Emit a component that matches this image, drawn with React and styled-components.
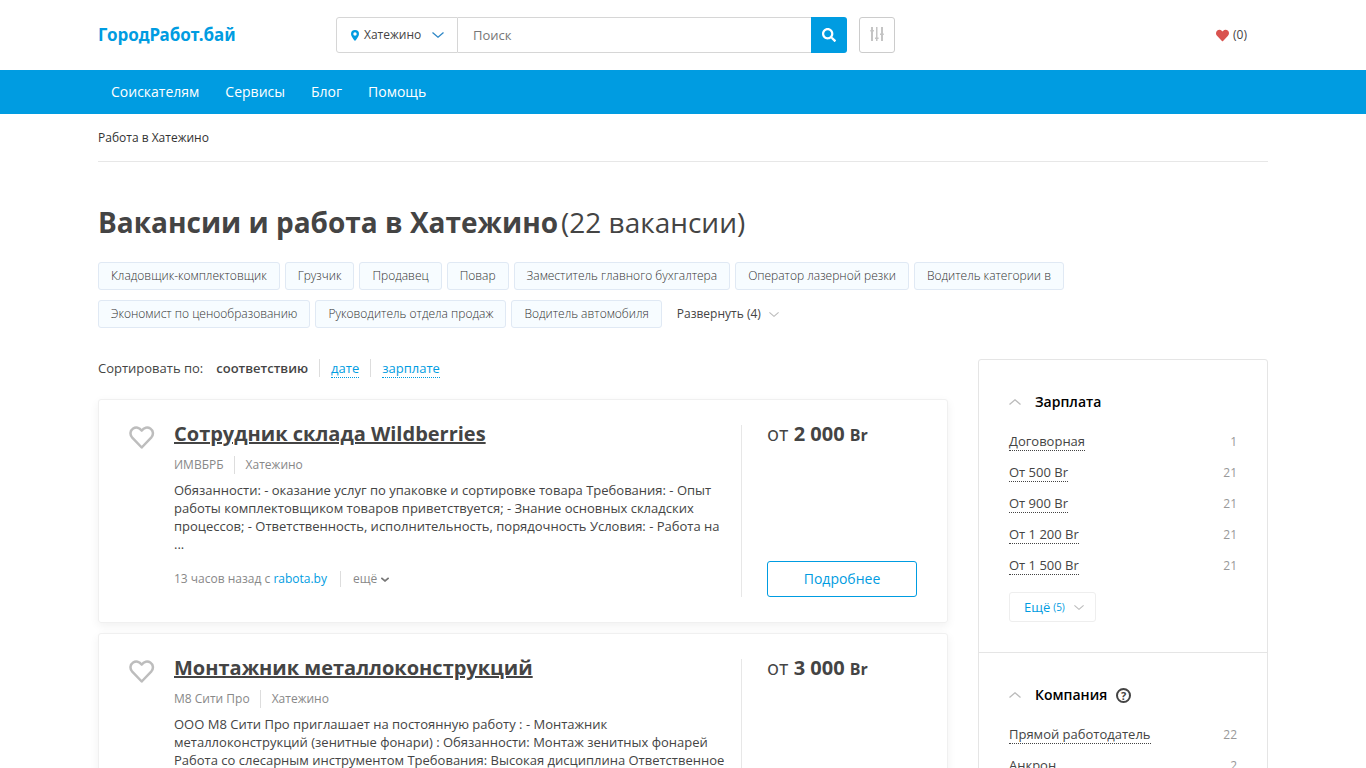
import styled, {createGlobalStyle} from 'styled-components';
import {FaSearch, FaHeart} from 'react-icons/fa';

const tags = [
    'Кладовщик-комплектовщик', 'Грузчик', 'Продавец', 'Повар',
    'Заместитель главного бухгалтера', 'Оператор лазерной резки',
    'Водитель категории в', 'Экономист по ценообразованию',
    'Руководитель отдела продаж', 'Водитель автомобиля'
];

const jobs = [
    {
        title: 'Сотрудник склада Wildberries',
        company: 'ИМВБРБ',
        city: 'Хатежино',
        price: '2 000',
        text: 'Обязанности: - оказание услуг по упаковке и сортировке товара Требования: - Опыт работы комплектовщиком товаров приветствуется; - Знание основных складских процессов; - Ответственность, исполнительность, порядочность Условия: - Работа на ...'
    },
    {
        title: 'Монтажник металлоконструкций',
        company: 'М8 Сити Про',
        city: 'Хатежино',
        price: '3 000',
        text: 'ООО М8 Сити Про приглашает на постоянную работу : - Монтажник металлоконструкций (зенитные фонари) : Обязанности: Монтаж зенитных фонарей Работа со слесарным инструментом Требования: Высокая дисциплина Ответственное ...'
    }
];

const salaries = [
    ['Договорная', 1], ['От 500 Br', 21], ['От 900 Br', 21],
    ['От 1 200 Br', 21], ['От 1 500 Br', 21]
];

const companies = [['Прямой работодатель', 22], ['Анкрон', 2]];

const Chevron = ({width = 12, height = 6, color = '#bbb', stroke = 1.3, up}) => (
    <svg width={width} height={height} viewBox="0 0 12 6" fill="none" stroke={color} strokeWidth={stroke} aria-hidden="true">
        <path d={up ? 'M.5 5.5 6 .8l5.500 4.700' : 'M.5.5 6 5.200 11.500.5'} />
    </svg>
);

const Pin = () => (
    <svg width="8" height="11" viewBox="0 0 8 11" aria-hidden="true">
        <path fill="#009ce1" fillRule="evenodd" d="M4 0a4 4 0 0 1 4 4c0 2.300-2.300 5-4 7C2.300 9 0 6.300 0 4a4 4 0 0 1 4-4zm0 2.300a1.700 1.700 0 1 0 0 3.400 1.700 1.700 0 0 0 0-3.400z" />
    </svg>
);

const Sliders = () => (
    <svg width="14" height="16" viewBox="0 0 14 16" fill="#c4c4c4" aria-hidden="true">
        <path d="M1 0h2v14H1zM6 0h1.500v14H6zM11 0h2v14h-2zM.3 3h3.600v1.500H.3zM5 10.500h3.600V12H5zM10 6.500h3.800V8H10z" />
    </svg>
);

const HeartOutline = () => (
    <svg width="27" height="24" viewBox="0 0 27 24" fill="none" stroke="#bdbdbd" strokeWidth="2.500" strokeLinejoin="round" aria-hidden="true">
        <path d="M12.700 4.600C10.500 1.500 6.800.800 4.100 2.500 1 4.600.700 8.600 3 11.300L12.700 21.500l9.700-10.200c2.300-2.700 2-6.700-1.100-8.800-2.700-1.700-6.400-1-8.600 2.100z" />
    </svg>
);

const JobCard = ({job}) => (
    <Card>
        <Favorite aria-label="В избранное"><HeartOutline /></Favorite>
        <JobBody>
            <JobTitle><a href="#job">{job.title}</a></JobTitle>
            <Meta>
                <span>{job.company}</span>
                <span>{job.city}</span>
            </Meta>
            <Description>{job.text}</Description>
            <Source>
                <span>13 часов назад с <a href="#source">rabota.by</a></span>
                <MoreToggle>ещё <Chevron width={8} height={5} color="#777" stroke={2.5} /></MoreToggle>
            </Source>
        </JobBody>
        <PriceColumn>
            <Price>от <b>{job.price}</b> <strong>Br</strong></Price>
            <Details href="#details">Подробнее</Details>
        </PriceColumn>
    </Card>
);

const FilterList = ({items}) => (
    <Filters>
        {items.map(([name, count]) => (
            <li key={name}>
                <a href="#filter">{name}</a>
                <span>{count}</span>
            </li>
        ))}
    </Filters>
);

const App = () => {
    return(
        <>
            <GlobalStyle />
            <Container>
                <Header>
                    <Logo href="#home">ГородРабот.бай</Logo>
                    <Search onSubmit={(e) => e.preventDefault()}>
                        <City type="button"><Pin /> Хатежино <Chevron color="#2f87c6" /></City>
                        <SearchInput type="text" placeholder="Поиск" aria-label="Поиск" />
                        <SearchButton aria-label="Найти"><FaSearch size={14} /></SearchButton>
                    </Search>
                    <FilterButton aria-label="Фильтры"><Sliders /></FilterButton>
                    <Favorites href="#favorites"><FaHeart size={13} color="#d9534f" /> (0)</Favorites>
                </Header>
            </Container>
            <NavBar>
                <Container>
                    <Nav>
                        <a href="#seekers">Соискателям</a>
                        <a href="#services">Сервисы</a>
                        <a href="#blog">Блог</a>
                        <a href="#help">Помощь</a>
                    </Nav>
                </Container>
            </NavBar>
            <Container>
                <Breadcrumb>Работа в Хатежино</Breadcrumb>
                <Heading>Вакансии и работа в Хатежино <span>(22 вакансии)</span></Heading>
                <Tags>
                    {tags.map((tag) => <Tag href="#tag" key={tag}>{tag}</Tag>)}
                    <Expand>Развернуть (4) <Chevron width={10} height={5} /></Expand>
                </Tags>
                <Columns>
                    <main>
                        <Sort>
                            <span>Сортировать по:</span>
                            <SortItem><b>соответствию</b></SortItem>
                            <SortItem><a href="#date">дате</a></SortItem>
                            <SortItem><a href="#salary">зарплате</a></SortItem>
                        </Sort>
                        <Jobs>
                            {jobs.map((job) => <JobCard job={job} key={job.title} />)}
                        </Jobs>
                    </main>
                    <Sidebar>
                        <Panel>
                            <PanelTitle><Chevron up /> Зарплата</PanelTitle>
                            <FilterList items={salaries} />
                            <ShowMore>Ещё <small>(5)</small><Chevron width={10} height={5} /></ShowMore>
                        </Panel>
                        <Panel>
                            <PanelTitle><Chevron up /> Компания <Help>?</Help></PanelTitle>
                            <FilterList items={companies} />
                        </Panel>
                    </Sidebar>
                </Columns>
            </Container>
        </>
    );
}

const GlobalStyle = createGlobalStyle`
    *{
        box-sizing: border-box;
    }

    body{
        margin: 0;
        background: #fff;
        color: #444;
        font: 13px/18px "Open Sans", "Noto Sans", sans-serif;
    }

    a{
        color: #009ce1;
        text-decoration: none;
    }

    button, input{
        font: inherit;
        color: inherit;
        padding: 0;
        margin: 0;
        border: 0;
        background: none;
    }

    button{
        cursor: pointer;
    }

    svg{
        flex: none;
    }
`;

const Container = styled.div`
    max-width: 1170px;
    margin: 0 auto;
`;

const Header = styled.header`
    display: flex;
    align-items: center;
    height: 70px;
    padding-right: 21px;
`;

const Logo = styled.a`
    width: 238px;
    font-family: "Noto Sans", sans-serif;
    font-size: 17px;
    line-height: 24px;
    font-weight: 700;
`;

const Search = styled.form`
    display: flex;
    flex: 0 1 511px;
    height: 36px;
    margin-right: 12px;
`;

const City = styled.button`
    display: flex;
    align-items: center;
    gap: 5px;
    width: 122px;
    padding-left: 14px;
    border: 1px solid #d6d6d6;
    border-radius: 3px 0 0 3px;
    font-size: 12px;

    svg:last-child{
        margin-left: 6px;
    }
`;

const SearchInput = styled.input`
    flex: 1;
    min-width: 0;
    padding: 0 15px;
    border: 1px solid #d6d6d6;
    border-width: 1px 0;

    &::placeholder{
        color: #777;
    }
`;

const SearchButton = styled.button`
    display: grid;
    place-items: center;
    width: 36px;
    background: #009ce1;
    color: #fff;
    border-radius: 0 3px 3px 0;
`;

const FilterButton = styled.button`
    display: grid;
    place-items: center;
    width: 36px;
    height: 36px;
    border: 1px solid #ccc;
    border-radius: 3px;
`;

const Favorites = styled.a`
    display: flex;
    align-items: center;
    gap: 4px;
    margin-left: auto;
    color: #444;
    font-size: 12px;
`;

const NavBar = styled.nav`
    background: #009ce1;
`;

const Nav = styled.div`
    display: flex;
    gap: 26px;
    padding: 0 13px;

    a{
        color: #fff;
        font-size: 14px;
        line-height: 44px;
    }
`;

const Breadcrumb = styled.div`
    padding: 15px 0 14px;
    border-bottom: 1px solid #e7e7e7;
    color: #333;
    font-size: 12px;
`;

const Heading = styled.h1`
    display: flex;
    flex-wrap: wrap;
    gap: 0 3px;
    margin: 41px 0 21px;
    font-size: 28px;
    line-height: 38px;
    font-weight: 700;

    span{
        font-weight: 400;
    }
`;

const Tags = styled.div`
    display: flex;
    flex-wrap: wrap;
    gap: 10px 5px;
    margin-bottom: 31px;
`;

const Tag = styled.a`
    padding: 0 12px;
    border: 1px solid #e0e9f4;
    border-radius: 3px;
    background: #f7fcff;
    color: #333;
    font-size: 12px;
    line-height: 26px;
    font-weight: 300;
`;

const Expand = styled.button`
    display: flex;
    align-items: center;
    gap: 8px;
    padding-left: 10px;
    font-size: 12px;
`;

const Columns = styled.div`
    display: grid;
    grid-template-columns: minmax(0, 1fr) 290px;
    gap: 30px;
    align-items: start;
`;

const Sort = styled.div`
    display: flex;
    margin-bottom: 22px;
`;

const SortItem = styled.span`
    padding: 0 11px;

    &:nth-child(2){
        padding-left: 13px;
    }

    & + &{
        border-left: 1px solid #ddd;
    }

    b{
        font-weight: 600;
    }

    a{
        border-bottom: 1px dotted #009ce1;
    }
`;

const Jobs = styled.div`
    display: grid;
    gap: 10px;
`;

const Card = styled.article`
    display: flex;
    padding: 25px 30px;
    border: 1px solid #f0f0f0;
    border-radius: 3px;
    box-shadow: 0 3px 10px rgba(0, 0, 0, .06);
`;

const Favorite = styled.button`
    align-self: flex-start;
    width: 45px;
    padding-top: 1px;
    text-align: left;
`;

const JobBody = styled.div`
    flex: 1;
    padding-right: 15px;
`;

const JobTitle = styled.h2`
    margin: 0 0 13px;
    font-size: 20px;
    line-height: 18px;
    font-weight: 700;

    a{
        color: #444;
        text-decoration: underline;
    }
`;

const Meta = styled.div`
    display: flex;
    margin-bottom: 7px;
    color: #888;
    font-size: 12px;

    span + span{
        margin-left: 10px;
        padding-left: 11px;
        border-left: 1px solid #ddd;
    }
`;

const Description = styled.p`
    margin: 0 0 18px;
`;

const Source = styled.div`
    display: flex;
    color: #888;
    font-size: 12px;
    line-height: 16px;
`;

const MoreToggle = styled.button`
    display: flex;
    align-items: center;
    gap: 4px;
    margin-left: 13px;
    padding-left: 12px;
    border-left: 1px solid #ddd;
`;

const PriceColumn = styled.div`
    display: flex;
    flex-direction: column;
    justify-content: space-between;
    width: 176px;
    min-height: 172px;
    padding-left: 25px;
    border-left: 1px solid #e7e7e7;
`;

const Price = styled.div`
    font-size: 20px;
    line-height: 18px;

    strong{
        font-size: 16px;
    }
`;

const Details = styled.a`
    border: 1px solid #009ce1;
    border-radius: 3px;
    font-size: 14px;
    line-height: 34px;
    text-align: center;
`;

const Sidebar = styled.aside`
    border: 1px solid #e5e5e5;
    border-radius: 3px;
`;

const Panel = styled.section`
    padding: 30px;

    & + &{
        border-top: 1px solid #e5e5e5;
    }
`;

const PanelTitle = styled.h3`
    display: flex;
    align-items: center;
    gap: 14px;
    margin: 0 0 12px;
    color: #000;
    font-size: 14px;
    line-height: 24px;
    font-weight: 600;
`;

const Help = styled.span`
    display: grid;
    place-items: center;
    width: 15px;
    height: 15px;
    margin-left: -5px;
    border: 2px solid #444;
    border-radius: 50%;
    color: #444;
    font-size: 11px;
    line-height: 11px;
    font-weight: 700;
`;

const Filters = styled.ul`
    margin: 0;
    padding: 0;
    list-style: none;

    li{
        display: flex;
        justify-content: space-between;
        align-items: center;
        height: 31px;
    }

    a{
        color: #444;
        border-bottom: 1px dotted #444;
    }

    span{
        color: #999;
        font-size: 12px;
    }
`;

const ShowMore = styled.button`
    display: flex;
    align-items: center;
    height: 30px;
    margin-top: 11px;
    padding: 0 11px 0 14px;
    border: 1px solid #eee;
    border-radius: 3px;
    color: #009ce1;

    small{
        margin: 0 9px 0 3px;
        font-size: 10px;
    }
`;

export default App;
